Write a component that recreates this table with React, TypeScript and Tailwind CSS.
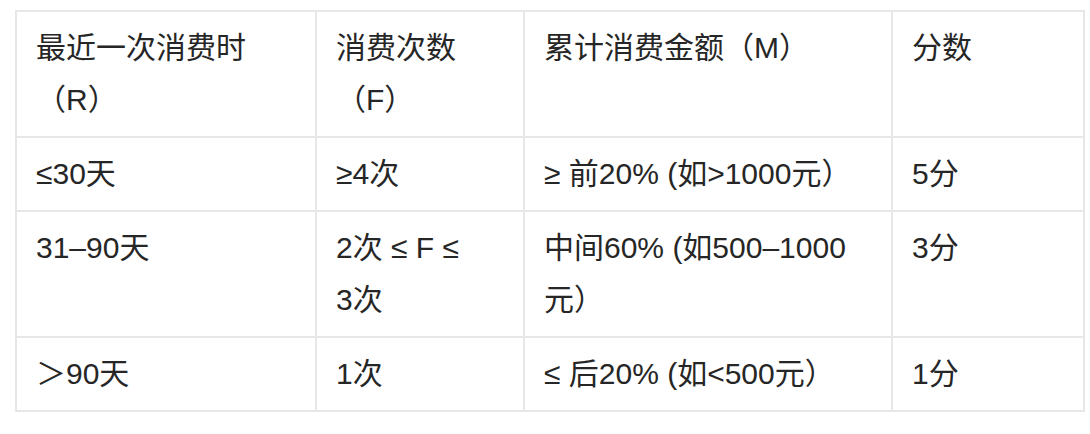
const rows: React.ReactNode[][] = [
  ["≤30天", "≥4次", "≥ 前20% (如>1000元）", "5分"],
  [
    "31–90天",
    <>
      2次 ≤ F ≤<br />
      3次
    </>,
    <>
      中间60% (如500–1000
      <br />
      元）
    </>,
    "3分",
  ],
  ["＞90天", "1次", "≤ 后20% (如<500元）", "1分"],
];

const cell =
  "border-2 border-[#e7e7e7] px-[19px] py-[10px] align-top text-left font-normal";

export default function App() {
  return (
    <div className="min-h-screen bg-white pl-[15px] pt-[10px]">
      <table
        className="w-[1068px] table-fixed border-collapse text-[30px] leading-[52px] text-[#262626]"
        style={{ fontFamily: '"Liberation Sans", "Noto Sans CJK SC", sans-serif' }}
      >
        <colgroup>
          <col className="w-[300px]" />
          <col className="w-[208px]" />
          <col className="w-[368px]" />
          <col className="w-[192px]" />
        </colgroup>
        <thead>
          <tr>
            <th className={cell}>
              最近一次消费时
              <br />
              （R）
            </th>
            <th className={cell}>
              消费次数
              <br />
              （F）
            </th>
            <th className={cell}>累计消费金额（M）</th>
            <th className={cell}>分数</th>
          </tr>
        </thead>
        <tbody>
          {rows.map((r, i) => (
            <tr key={i}>
              {r.map((c, j) => (
                <td key={j} className={cell}>
                  {c}
                </td>
              ))}
            </tr>
          ))}
        </tbody>
      </table>
    </div>
  );
}
